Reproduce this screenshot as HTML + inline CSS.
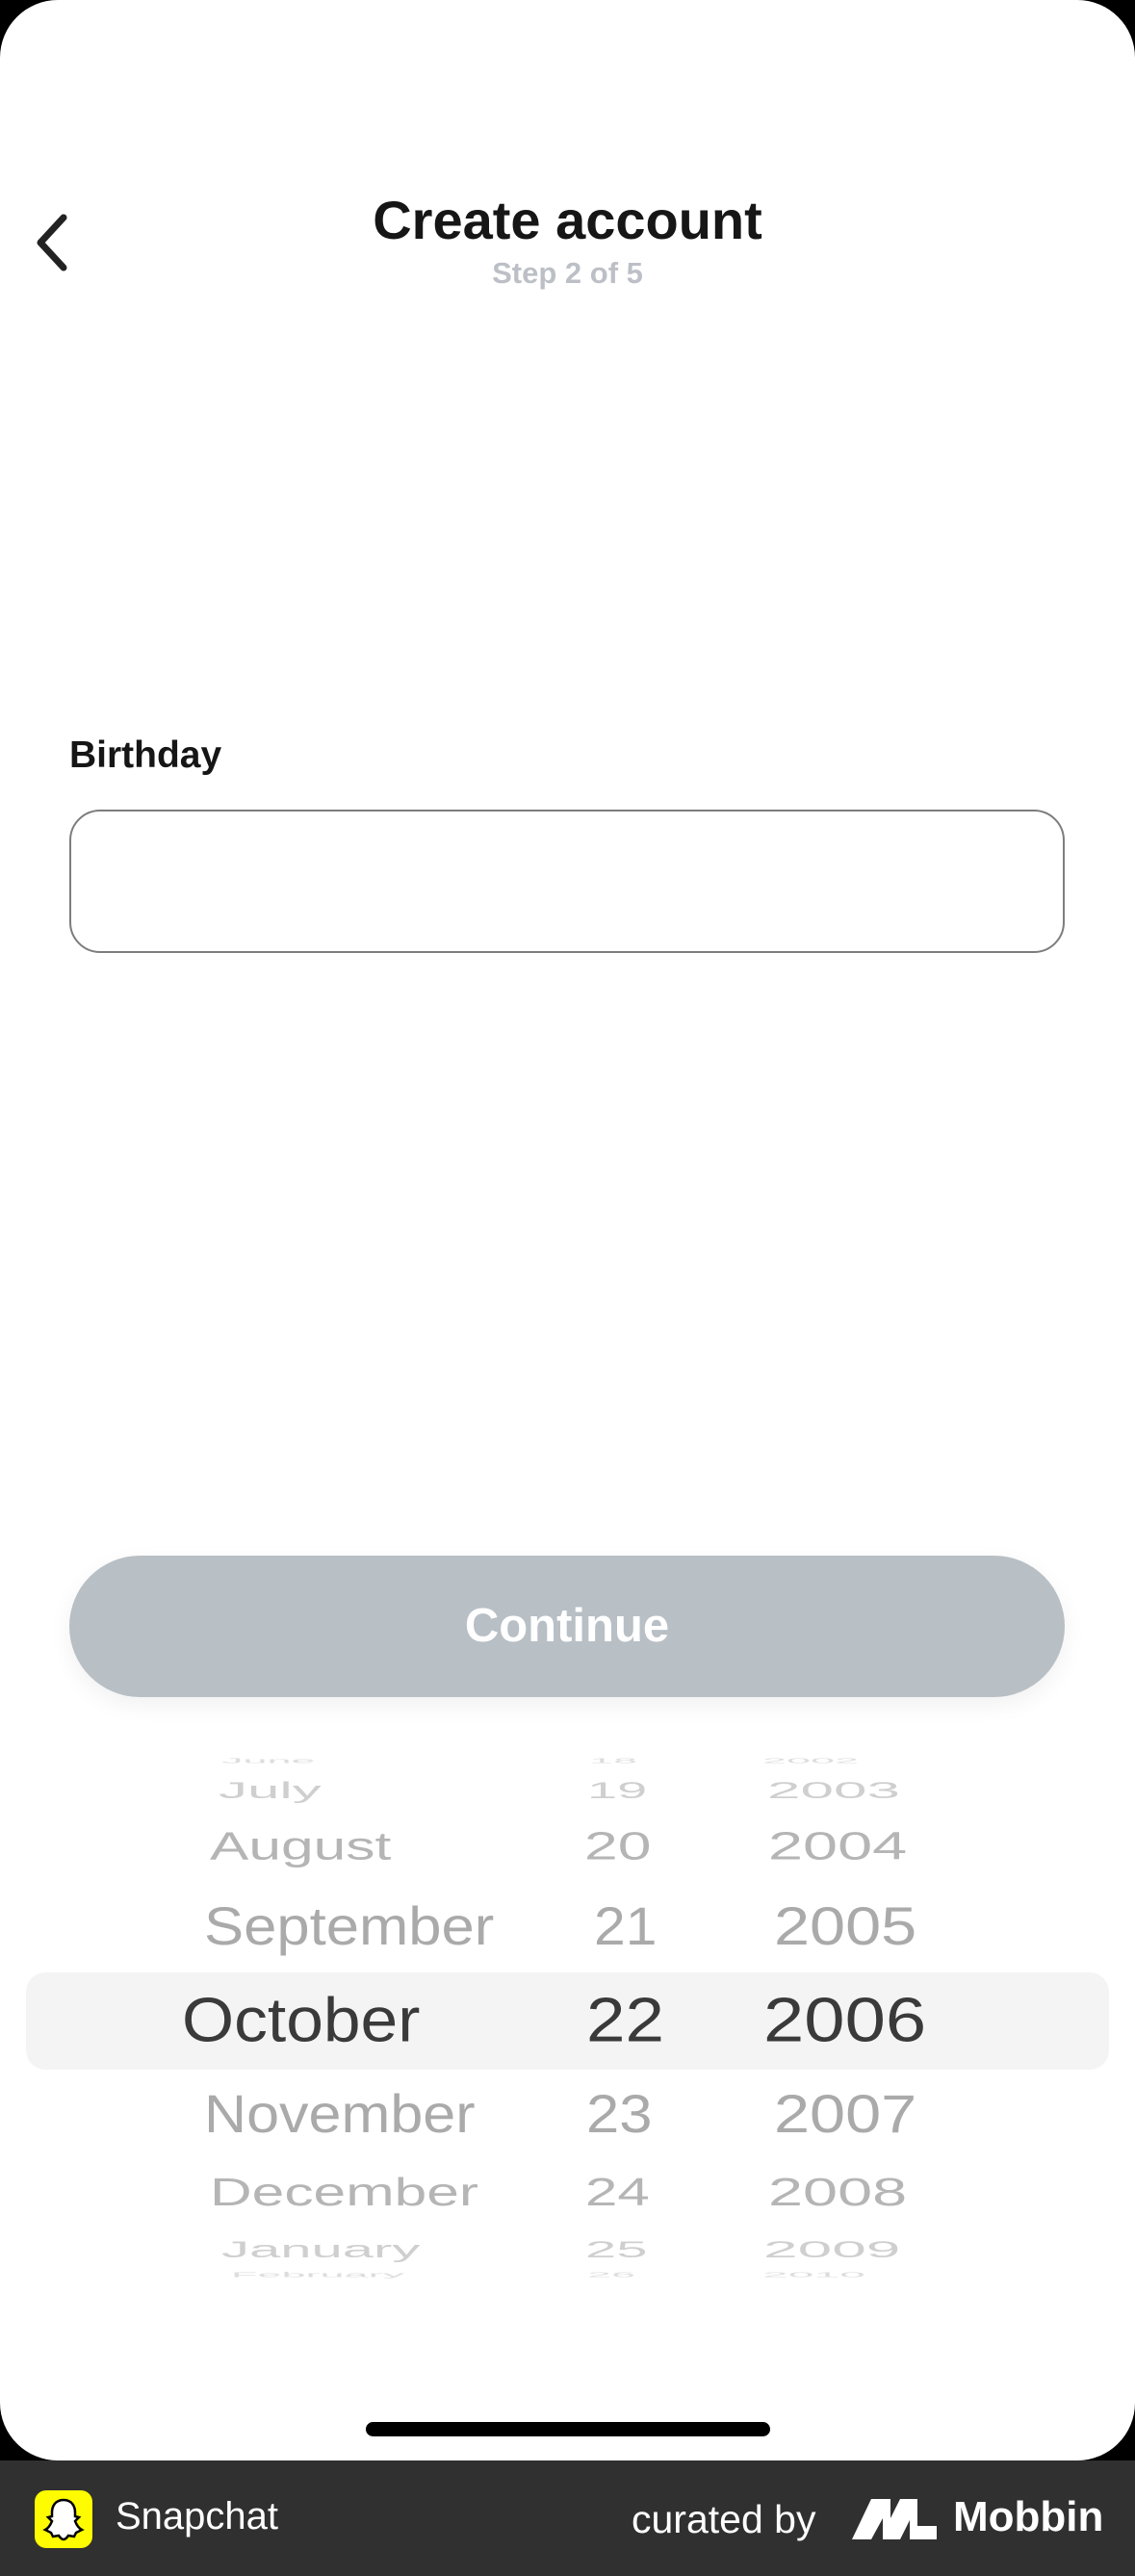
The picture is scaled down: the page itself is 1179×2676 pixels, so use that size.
<!DOCTYPE html>
<html><head><meta charset="utf-8"><style>
*{margin:0;padding:0;box-sizing:border-box}
html,body{width:1179px;height:2676px;background:#000;overflow:hidden;font-family:"Liberation Sans",sans-serif}
.screen{position:absolute;left:0;top:0;width:1179px;height:2556px;background:#fff;border-radius:60px}
.abs{position:absolute}
.title{left:0;width:1179px;text-align:center;top:196px;font-size:56px;font-weight:bold;color:#161616}
.step{left:0;width:1179px;text-align:center;top:266px;font-size:31px;font-weight:bold;color:#bcc0c6}
.label{left:72px;top:763px;font-size:39px;font-weight:bold;color:#161616}
.input{left:72px;top:841px;width:1034px;height:149px;border:2px solid #7d7d7d;border-radius:32px}
.btn{left:72px;top:1616px;width:1034px;height:147px;border-radius:74px;background:#b8bfc5;color:#fff;font-size:49px;font-weight:bold;text-align:center;line-height:147px;box-shadow:0 8px 24px rgba(0,0,0,0.06)}
.hl{left:27px;top:2049px;width:1125px;height:101px;border-radius:20px;background:#f4f4f4}
.r{position:absolute;line-height:1;white-space:nowrap;transform-origin:left center}
.home{left:380px;top:2516px;width:420px;height:15px;border-radius:8px;background:#000}
.bar{left:0;top:2556px;width:1179px;height:120px;background:#303030}
</style></head><body>
<div class="screen">
<svg class="abs" style="left:30px;top:220px" width="50" height="64" viewBox="0 0 50 64"><path d="M36 6 L12 32 L36 58" fill="none" stroke="#222" stroke-width="7" stroke-linecap="round" stroke-linejoin="round"/></svg>
<div class="abs title">Create account</div>
<div class="abs step">Step 2 of 5</div>
<div class="abs label">Birthday</div>
<div class="abs input"></div>
<div class="abs btn">Continue</div>
<div class="abs hl"></div>

<div class="r" style="left:230px;top:1829px;font-size:30px;color:#ddd;transform:translateY(-50%) scale(1.5,0.25)">June</div>
<div class="r" style="left:612px;top:1829px;font-size:30px;color:#ddd;transform:translateY(-50%) scale(1.5,0.25)">18</div>
<div class="r" style="left:792px;top:1829px;font-size:30px;color:#ddd;transform:translateY(-50%) scale(1.5,0.25)">2002</div>

<div class="r" style="left:227px;top:1860px;font-size:40px;color:#cfcfcf;transform:translateY(-50%) scale(1.5,0.6)">July</div>
<div class="r" style="left:610px;top:1860px;font-size:40px;color:#cfcfcf;transform:translateY(-50%) scale(1.4,0.6)">19</div>
<div class="r" style="left:797px;top:1860px;font-size:40px;color:#cfcfcf;transform:translateY(-50%) scale(1.55,0.6)">2003</div>

<div class="r" style="left:218px;top:1919px;font-size:48px;color:#b5b5b5;transform:translateY(-50%) scale(1.26,0.85)">August</div>
<div class="r" style="left:607px;top:1919px;font-size:48px;color:#b5b5b5;transform:translateY(-50%) scale(1.3,0.85)">20</div>
<div class="r" style="left:798px;top:1919px;font-size:48px;color:#b5b5b5;transform:translateY(-50%) scale(1.35,0.85)">2004</div>

<div class="r" style="left:212px;top:2001px;font-size:56px;color:#aaa;transform:translateY(-50%) scaleX(1.1)">September</div>
<div class="r" style="left:617px;top:2001px;font-size:56px;color:#aaa;transform:translateY(-50%) scaleX(1.05)">21</div>
<div class="r" style="left:804px;top:2001px;font-size:56px;color:#aaa;transform:translateY(-50%) scaleX(1.19)">2005</div>

<div class="r" style="left:189px;top:2098px;font-size:65px;color:#3a3a3a;transform:translateY(-50%) scaleX(1.07)">October</div>
<div class="r" style="left:609px;top:2098px;font-size:65px;color:#3a3a3a;transform:translateY(-50%) scaleX(1.12)">22</div>
<div class="r" style="left:793px;top:2098px;font-size:65px;color:#3a3a3a;transform:translateY(-50%) scaleX(1.17)">2006</div>

<div class="r" style="left:212px;top:2196px;font-size:56px;color:#aaa;transform:translateY(-50%) scaleX(1.09)">November</div>
<div class="r" style="left:609px;top:2196px;font-size:56px;color:#aaa;transform:translateY(-50%) scaleX(1.1)">23</div>
<div class="r" style="left:804px;top:2196px;font-size:56px;color:#aaa;transform:translateY(-50%) scaleX(1.19)">2007</div>

<div class="r" style="left:218px;top:2278px;font-size:48px;color:#b5b5b5;transform:translateY(-50%) scale(1.26,0.85)">December</div>
<div class="r" style="left:608px;top:2278px;font-size:48px;color:#b5b5b5;transform:translateY(-50%) scale(1.25,0.85)">24</div>
<div class="r" style="left:798px;top:2278px;font-size:48px;color:#b5b5b5;transform:translateY(-50%) scale(1.35,0.85)">2008</div>

<div class="r" style="left:230px;top:2337px;font-size:40px;color:#cfcfcf;transform:translateY(-50%) scale(1.45,0.6)">January</div>
<div class="r" style="left:608px;top:2337px;font-size:40px;color:#cfcfcf;transform:translateY(-50%) scale(1.45,0.6)">25</div>
<div class="r" style="left:793px;top:2337px;font-size:40px;color:#cfcfcf;transform:translateY(-50%) scale(1.6,0.6)">2009</div>

<div class="r" style="left:240px;top:2363px;font-size:30px;color:#ddd;transform:translateY(-50%) scale(1.5,0.25)">February</div>
<div class="r" style="left:610px;top:2363px;font-size:30px;color:#ddd;transform:translateY(-50%) scale(1.5,0.25)">26</div>
<div class="r" style="left:792px;top:2363px;font-size:30px;color:#ddd;transform:translateY(-50%) scale(1.6,0.25)">2010</div>

<div class="abs home"></div>
</div>
<div class="abs bar">
  <div class="abs" style="left:36px;top:31px;width:60px;height:60px;border-radius:12px;background:#fffc00"></div>
  <svg class="abs" style="left:44px;top:38px" width="44" height="46" viewBox="0 0 44 46"><path d="M22 3 C13 3 10 10 10 16 L10 20 L6 21 L10 25 C8 30 5 33 3 34 L9 37 L11 41 L17 40 C19 43 21 44 22 44 C23 44 25 43 27 40 L33 41 L35 37 L41 34 C39 33 36 30 34 25 L38 21 L34 20 L34 16 C34 10 31 3 22 3 Z" fill="#fff" stroke="#000" stroke-width="2.5"/></svg>
  <div class="abs" style="left:120px;top:36px;font-size:40px;color:#fff">Snapchat</div>
  <div class="abs" style="left:656px;top:38px;font-size:41px;color:#fff">curated by</div>
  <svg class="abs" style="left:885px;top:40px" width="88" height="42" viewBox="0 0 88 42"><path d="M0 42 L20 0 L40 0 L40 20 L50 0 L68 0 L68 28 L88 28 L88 42 L60 42 L60 22 L50 42 L32 42 L32 20 L20 42 Z" fill="#fff"/></svg>
  <div class="abs" style="left:990px;top:34px;font-size:44px;font-weight:bold;color:#fff">Mobbin</div>
</div>
</body></html>
